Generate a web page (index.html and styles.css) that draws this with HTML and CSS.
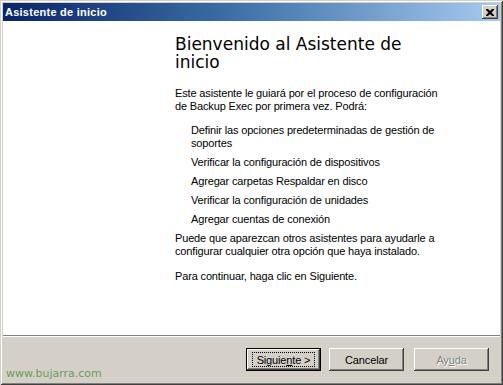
FILE: index.html
```html
<!DOCTYPE html>
<html lang="es">
<head>
<meta charset="utf-8">
<title>Asistente de inicio</title>
<link rel="stylesheet" href="styles.css">
</head>
<body>
<div class="window">
  <div class="titlebar">
    <span class="title">Asistente de inicio</span>
    <button class="close" aria-label="Cerrar">
      <svg width="8" height="7" viewBox="0 0 8 7"><path d="M0 0h2l2 2 2-2h2v1l-2.5 2.5L8 6v1H6L4 5 2 7H0V6l2.5-2.5L0 1z" fill="#000"/></svg>
    </button>
  </div>
  <div class="page">
    <div class="content">
      <h1 class="heading">Bienvenido al Asistente de inicio</h1>
      <p class="intro">Este asistente le guiará por el proceso de configuración de Backup Exec por primera vez. Podrá:</p>
      <ul class="tasks">
        <li>Definir las opciones predeterminadas de gestión de soportes</li>
        <li>Verificar la configuración de dispositivos</li>
        <li>Agregar carpetas Respaldar en disco</li>
        <li>Verificar la configuración de unidades</li>
        <li>Agregar cuentas de conexión</li>
      </ul>
      <p class="note">Puede que aparezcan otros asistentes para ayudarle a configurar cualquier otra opción que haya instalado.</p>
      <p class="cont">Para continuar, haga clic en Siguiente.</p>
    </div>
  </div>
  <div class="footer">
    <button class="btn btn-default"><span class="focus">Siguie<u>n</u>te &gt;</span></button>
    <button class="btn btn-cancel">Cancelar</button>
    <button class="btn btn-disabled" disabled>Ay<u>u</u>da</button>
  </div>
  <div class="watermark">www.bujarra.com</div>
</div>
</body>
</html>
```
FILE: styles.css
```css
html, body {
  margin: 0;
  padding: 0;
  background: #d4d0c8;
}

.window {
  position: relative;
  width: 503px;
  height: 385px;
  box-sizing: border-box;
  padding: 3px;
  background: #d4d0c8;
  display: flex;
  flex-direction: column;
  box-shadow: inset 1px 1px 0 #d4d0c8, inset -1px -1px 0 #404040,
              inset 2px 2px 0 #ffffff, inset -2px -2px 0 #808080;
  font-family: "Liberation Sans", Arial, sans-serif;
  font-size: 11px;
  color: #000;
}

.titlebar {
  height: 18px;
  flex: none;
  display: flex;
  align-items: center;
  justify-content: space-between;
  padding: 0 2px 0 2px;
  background: linear-gradient(to right, #0a246a 0%, #3a6ea5 45%, #a6caf0 100%);
}

.title {
  color: #fff;
  font-weight: bold;
  font-size: 11px;
  letter-spacing: 0.25px;
}

.close {
  width: 16px;
  height: 14px;
  padding: 0;
  border: none;
  background: #d4d0c8;
  display: flex;
  align-items: center;
  justify-content: center;
  box-shadow: inset -1px -1px 0 #404040, inset 1px 1px 0 #ffffff,
              inset -2px -2px 0 #808080;
}

.page {
  height: 314px;
  flex: none;
  background: #fff;
  border-bottom: 1px solid #808080;
  box-shadow: 0 1px 0 #ffffff;
  margin-bottom: 1px;
}

.content {
  width: 268px;
  margin-left: 172px;
  padding-top: 14px;
}

.heading {
  margin: 0;
  font-family: "DejaVu Sans", Verdana, sans-serif;
  font-weight: normal;
  font-size: 17px;
  line-height: 18px;
}

.intro, .note, .cont {
  margin: 0;
  line-height: 13px;
  letter-spacing: -0.15px;
}

.intro { margin-top: 16px; }

.tasks {
  list-style: none;
  margin: 11px 0 0;
  padding: 0 0 0 16px;
  display: flex;
  flex-direction: column;
  gap: 6px;
  line-height: 13px;
  letter-spacing: -0.15px;
}

.note { margin-top: 6px; }
.cont { margin-top: 12px; }

.footer {
  flex: 1;
  display: flex;
  justify-content: flex-end;
  align-items: flex-start;
  padding: 11px 11px 0 0;
  gap: 8px;
}

.btn {
  width: 75px;
  height: 23px;
  padding: 0;
  border: none;
  background: #d4d0c8;
  font-family: "Liberation Sans", Arial, sans-serif;
  font-size: 11px;
  color: #000;
  display: flex;
  align-items: center;
  justify-content: center;
  letter-spacing: -0.15px;
  box-shadow: inset -1px -1px 0 #404040, inset 1px 1px 0 #ffffff,
              inset -2px -2px 0 #808080;
}

.btn-default {
  border: 1px solid #000;
  box-shadow: inset -1px -1px 0 #404040, inset 1px 1px 0 #ffffff,
              inset -2px -2px 0 #808080;
}

.focus {
  display: flex;
  align-items: center;
  justify-content: center;
  width: 63px;
  height: 15px;
  box-sizing: border-box;
  border: 1px dotted #000;
}

.btn-disabled {
  margin-left: 2px;
  color: #808080;
  text-shadow: 1px 1px 0 #ffffff;
}

.watermark {
  position: absolute;
  left: 6px;
  top: 367px;
  font-family: "DejaVu Sans", Verdana, sans-serif;
  font-size: 11px;
  line-height: 13px;
  color: #6d9a5c;
}
```
